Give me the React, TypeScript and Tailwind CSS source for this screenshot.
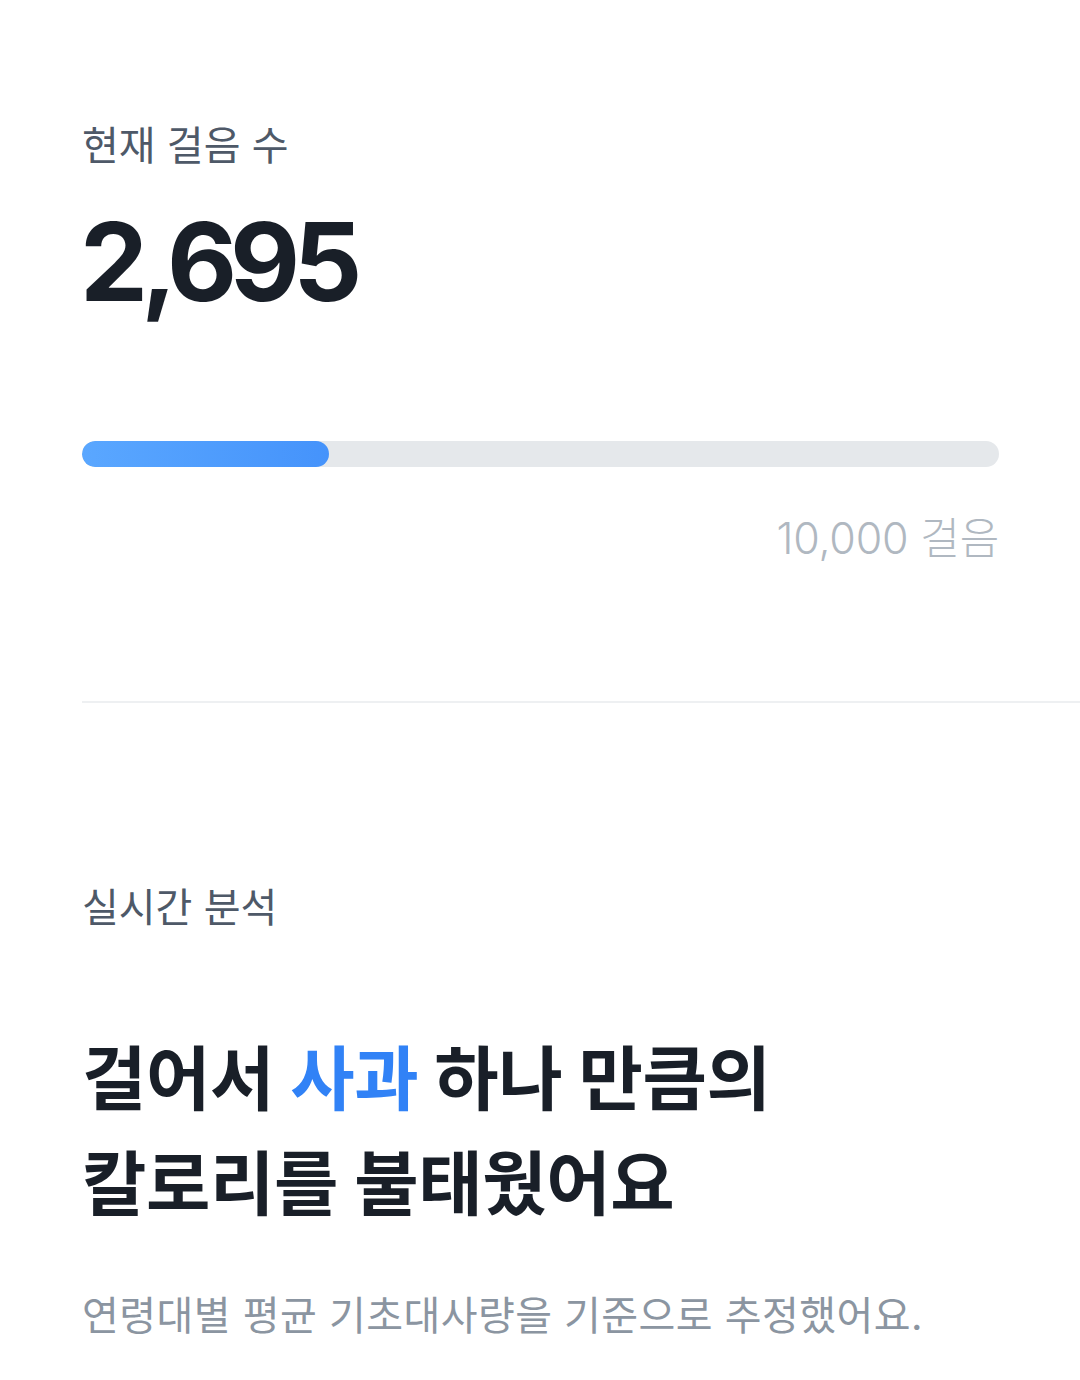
import React from "react";

const font = "font-['Inter','Noto_Sans_CJK_KR',sans-serif]";

export default function App() {
  const current = 2695;
  const goal = 10000;
  const pct = (current / goal) * 100;

  return (
    <div className={`min-h-[1380px] w-[1080px] bg-white pl-[82px] ${font}`}>
      {/* steps */}
      <section className="pr-[81px] pt-[122px]">
        <p className="text-[40px] leading-[48px] text-[#4e5968]">현재 걸음 수</p>
        <p className="-ml-[2px] mt-[38px] text-[108px] font-bold leading-none tracking-[-7px] text-[#191f28]">
          {current.toLocaleString("en-US")}
        </p>
        <div className="mt-[125px] h-[26px] w-full overflow-hidden rounded-full bg-[#e5e8eb]">
          <div
            className="h-full rounded-full bg-gradient-to-r from-[#5aa7ff] to-[#4593fb]"
            style={{ width: `${pct}%` }}
          />
        </div>
        <p className="mt-[47px] text-right text-[43px] font-light leading-[48px] tracking-[-0.2px] text-[#b0b8c1]">
          10,000 걸음
        </p>
      </section>

      <div className="mt-[139px] h-[2px] bg-[#eef0f2]" />

      {/* analysis */}
      <section className="pr-[81px] pt-[181px]">
        <p className="text-[40px] leading-[48px] text-[#4e5968]">실시간 분석</p>
        <h1 className="mt-[95px] text-[70px] font-bold leading-[105px] tracking-[-0.4px] text-[#191f28]">
          걸어서 <span className="text-[#3182f6]">사과</span> 하나 만큼의
          <br />
          칼로리를 불태웠어요
        </h1>
        <p className="mt-[55px] text-[40px] leading-[48px] tracking-[0.45px] text-[#8b95a1]">
          연령대별 평균 기초대사량을 기준으로 추정했어요.
        </p>
      </section>
    </div>
  );
}
